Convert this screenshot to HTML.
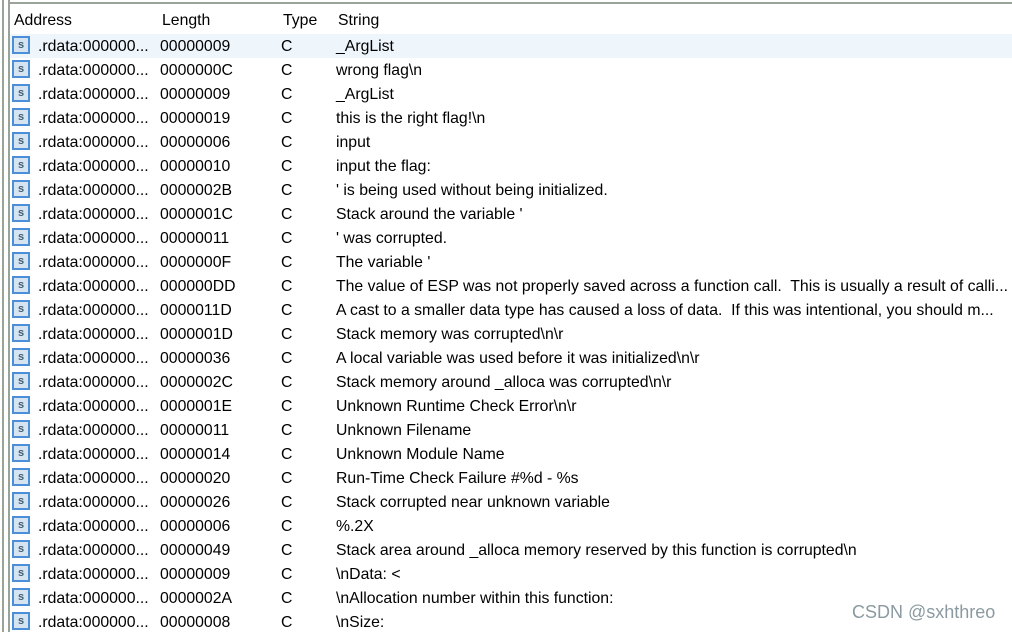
<!DOCTYPE html>
<html><head><meta charset="utf-8"><style>
body{margin:0;width:1012px;height:632px;background:#fff;overflow:hidden;position:relative;font-family:"Liberation Sans","Noto Sans CJK SC",sans-serif;font-size:15.8px;color:#000}
.vl{position:absolute;top:0;bottom:0;width:2px;background:#9aa39a}
.tl{position:absolute;left:8px;right:0;top:2px;height:2px;background:#9aa39a}
.h{position:absolute;top:12px}
.row{position:absolute;left:10px;right:0;height:24px}
.row span{position:absolute;top:4px;white-space:nowrap}
.ic{position:absolute;left:2px;top:2px;width:18px;height:18px;background:#4a8fd8;box-sizing:border-box;padding:2px 2px 2px 2px}
.ic i{display:block;width:14px;height:14px;background:#d6e4f2;font:bold 11px "Liberation Sans",sans-serif;color:#3f6078;text-align:center;line-height:14px;font-style:normal}
.wm{position:absolute;left:852px;top:602px;font-size:18px;color:#8a9aa0}
</style></head><body>
<div class="vl" style="left:2px"></div><div class="vl" style="left:8px"></div><div class="tl"></div>
<div class="h" style="left:14px">Address</div>
<div class="h" style="left:162px">Length</div>
<div class="h" style="left:283px">Type</div>
<div class="h" style="left:338px">String</div>
<div class="row" style="top:34px;background:#eef6fc"><div class="ic"><i>s</i></div><span style="left:28px">.rdata:000000...</span><span style="left:150px">00000009</span><span style="left:271px">C</span><span style="left:326px">_ArgList</span></div>
<div class="row" style="top:58px"><div class="ic"><i>s</i></div><span style="left:28px">.rdata:000000...</span><span style="left:150px">0000000C</span><span style="left:271px">C</span><span style="left:326px">wrong flag\n</span></div>
<div class="row" style="top:82px"><div class="ic"><i>s</i></div><span style="left:28px">.rdata:000000...</span><span style="left:150px">00000009</span><span style="left:271px">C</span><span style="left:326px">_ArgList</span></div>
<div class="row" style="top:106px"><div class="ic"><i>s</i></div><span style="left:28px">.rdata:000000...</span><span style="left:150px">00000019</span><span style="left:271px">C</span><span style="left:326px">this is the right flag!\n</span></div>
<div class="row" style="top:130px"><div class="ic"><i>s</i></div><span style="left:28px">.rdata:000000...</span><span style="left:150px">00000006</span><span style="left:271px">C</span><span style="left:326px">input</span></div>
<div class="row" style="top:154px"><div class="ic"><i>s</i></div><span style="left:28px">.rdata:000000...</span><span style="left:150px">00000010</span><span style="left:271px">C</span><span style="left:326px">input the flag:</span></div>
<div class="row" style="top:178px"><div class="ic"><i>s</i></div><span style="left:28px">.rdata:000000...</span><span style="left:150px">0000002B</span><span style="left:271px">C</span><span style="left:326px">' is being used without being initialized.</span></div>
<div class="row" style="top:202px"><div class="ic"><i>s</i></div><span style="left:28px">.rdata:000000...</span><span style="left:150px">0000001C</span><span style="left:271px">C</span><span style="left:326px">Stack around the variable '</span></div>
<div class="row" style="top:226px"><div class="ic"><i>s</i></div><span style="left:28px">.rdata:000000...</span><span style="left:150px">00000011</span><span style="left:271px">C</span><span style="left:326px">' was corrupted.</span></div>
<div class="row" style="top:250px"><div class="ic"><i>s</i></div><span style="left:28px">.rdata:000000...</span><span style="left:150px">0000000F</span><span style="left:271px">C</span><span style="left:326px">The variable '</span></div>
<div class="row" style="top:274px"><div class="ic"><i>s</i></div><span style="left:28px">.rdata:000000...</span><span style="left:150px">000000DD</span><span style="left:271px">C</span><span style="left:326px">The value of ESP was not properly saved across a function call.&nbsp; This is usually a result of calli...</span></div>
<div class="row" style="top:298px"><div class="ic"><i>s</i></div><span style="left:28px">.rdata:000000...</span><span style="left:150px">0000011D</span><span style="left:271px">C</span><span style="left:326px">A cast to a smaller data type has caused a loss of data.&nbsp; If this was intentional, you should m...</span></div>
<div class="row" style="top:322px"><div class="ic"><i>s</i></div><span style="left:28px">.rdata:000000...</span><span style="left:150px">0000001D</span><span style="left:271px">C</span><span style="left:326px">Stack memory was corrupted\n\r</span></div>
<div class="row" style="top:346px"><div class="ic"><i>s</i></div><span style="left:28px">.rdata:000000...</span><span style="left:150px">00000036</span><span style="left:271px">C</span><span style="left:326px">A local variable was used before it was initialized\n\r</span></div>
<div class="row" style="top:370px"><div class="ic"><i>s</i></div><span style="left:28px">.rdata:000000...</span><span style="left:150px">0000002C</span><span style="left:271px">C</span><span style="left:326px">Stack memory around _alloca was corrupted\n\r</span></div>
<div class="row" style="top:394px"><div class="ic"><i>s</i></div><span style="left:28px">.rdata:000000...</span><span style="left:150px">0000001E</span><span style="left:271px">C</span><span style="left:326px">Unknown Runtime Check Error\n\r</span></div>
<div class="row" style="top:418px"><div class="ic"><i>s</i></div><span style="left:28px">.rdata:000000...</span><span style="left:150px">00000011</span><span style="left:271px">C</span><span style="left:326px">Unknown Filename</span></div>
<div class="row" style="top:442px"><div class="ic"><i>s</i></div><span style="left:28px">.rdata:000000...</span><span style="left:150px">00000014</span><span style="left:271px">C</span><span style="left:326px">Unknown Module Name</span></div>
<div class="row" style="top:466px"><div class="ic"><i>s</i></div><span style="left:28px">.rdata:000000...</span><span style="left:150px">00000020</span><span style="left:271px">C</span><span style="left:326px">Run-Time Check Failure #%d - %s</span></div>
<div class="row" style="top:490px"><div class="ic"><i>s</i></div><span style="left:28px">.rdata:000000...</span><span style="left:150px">00000026</span><span style="left:271px">C</span><span style="left:326px">Stack corrupted near unknown variable</span></div>
<div class="row" style="top:514px"><div class="ic"><i>s</i></div><span style="left:28px">.rdata:000000...</span><span style="left:150px">00000006</span><span style="left:271px">C</span><span style="left:326px">%.2X</span></div>
<div class="row" style="top:538px"><div class="ic"><i>s</i></div><span style="left:28px">.rdata:000000...</span><span style="left:150px">00000049</span><span style="left:271px">C</span><span style="left:326px">Stack area around _alloca memory reserved by this function is corrupted\n</span></div>
<div class="row" style="top:562px"><div class="ic"><i>s</i></div><span style="left:28px">.rdata:000000...</span><span style="left:150px">00000009</span><span style="left:271px">C</span><span style="left:326px">\nData: &lt;</span></div>
<div class="row" style="top:586px"><div class="ic"><i>s</i></div><span style="left:28px">.rdata:000000...</span><span style="left:150px">0000002A</span><span style="left:271px">C</span><span style="left:326px">\nAllocation number within this function:</span></div>
<div class="row" style="top:610px"><div class="ic"><i>s</i></div><span style="left:28px">.rdata:000000...</span><span style="left:150px">00000008</span><span style="left:271px">C</span><span style="left:326px">\nSize:</span></div>
<div class="wm">CSDN @sxhthreo</div>
</body></html>
